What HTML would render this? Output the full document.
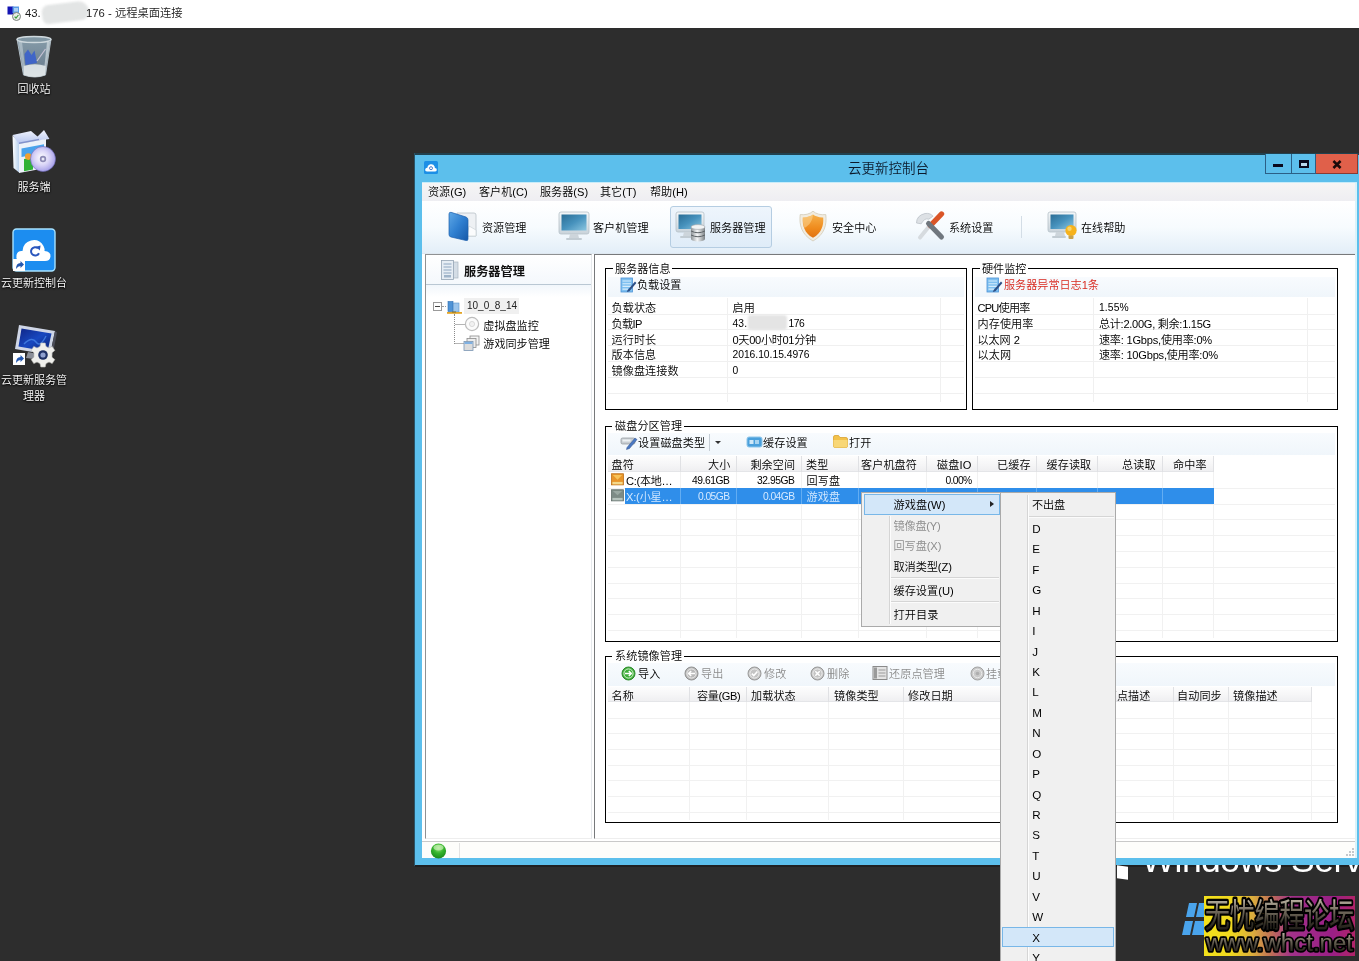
<!DOCTYPE html>
<html lang="zh-CN">
<head>
<meta charset="utf-8">
<title>远程桌面连接</title>
<style>
*{box-sizing:border-box;margin:0;padding:0}
html,body{width:1359px;height:961px;overflow:hidden;background:#2d2d2d}
body{position:relative;font-family:"Liberation Sans","Noto Sans CJK SC",sans-serif;font-size:11.1px;color:#000;line-height:1;font-weight:350}
.a{position:absolute}
.t{position:absolute;white-space:nowrap;line-height:16px;height:16px}
/* top RDP bar */
#rdp{left:0;top:0;width:1359px;height:28px;background:#fff}
/* desktop icons */
.dl{position:absolute;color:#fff;font-size:11px;line-height:15px;text-align:center;width:80px;text-shadow:0 1px 2px #000,0 0 2px #000}
/* window */
#win{left:415px;top:154px;width:960px;height:711px;background:#5cbfec}
#client{left:422px;top:183px;width:935px;height:675px;background:#fff}
#menubar{left:422px;top:183px;width:935px;height:18px;background:linear-gradient(#f6f5f5,#eeeef2)}
#toolbar{left:422px;top:201px;width:935px;height:52px;background:linear-gradient(#ffffff 0%,#f7fbfe 50%,#e3eef8 100%)}
.tb{position:absolute;font-size:12px;line-height:16px;white-space:nowrap}
.panel{position:absolute;background:#fff;border:1px solid #8c8e90}
.grp{position:absolute;border:1px solid #000}
.grp>.lg{position:absolute;top:-8px;left:7px;background:#fff;padding:0 2px;line-height:16px;height:16px;white-space:nowrap}
.hl{position:absolute;height:1px;background:#ededed}
.vl{position:absolute;width:1px;background:#ededed}
.gray{color:#8a8a8a}
/* menus */
.menu{position:absolute;background:#f0f0f0;border:1px solid #aaaaaa}
.mi{position:absolute;white-space:nowrap;line-height:16px;height:16px}
</style>
</head>
<body>
<div id="root" style="position:absolute;left:0;top:0;width:1359px;height:961px;overflow:hidden;will-change:transform;transform:translateZ(0)">

<!-- RDP title bar -->
<div id="rdp" class="a"></div>
<svg class="a" style="left:6px;top:5px" width="16" height="17" viewBox="0 0 16 17">
 <rect x="1.5" y="1.5" width="6" height="8" fill="#1414b4"/>
 <rect x="6.5" y="1.5" width="6.5" height="6.5" fill="#5a9be6"/>
 <rect x="8" y="3" width="4" height="3.5" fill="#a9d0f5"/>
 <circle cx="10.5" cy="11.5" r="4" fill="#e9ece9" stroke="#7d837d" stroke-width="1"/>
 <path d="M8.6 11.6 L10 13 L12.4 10" stroke="#3b9a3b" stroke-width="1.2" fill="none"/>
</svg>
<div class="t" style="left:25px;top:5px;font-size:11.3px;color:#1a1a1a">43.</div>
<div class="a" style="left:42px;top:3px;width:47px;height:19px;background:#e3e5e5;border-radius:9px 14px 12px 8px;filter:blur(1.2px);transform:rotate(-7deg)"></div>
<div class="t" style="left:86px;top:5px;font-size:11.3px;color:#1a1a1a">176 - 远程桌面连接</div>
<!-- desktop icons -->
<svg class="a" style="left:14px;top:33px" width="42" height="48" viewBox="0 0 42 48">
 <defs>
  <linearGradient id="rb1" x1="0" x2="1"><stop offset="0" stop-color="#9fb3bf"/><stop offset=".25" stop-color="#6f8796"/><stop offset=".6" stop-color="#7d8f9c"/><stop offset="1" stop-color="#b9c4cb"/></linearGradient>
  <linearGradient id="rb2" x1="0" y1="0" x2="0" y2="1"><stop offset="0" stop-color="#8aa1af" stop-opacity=".95"/><stop offset=".65" stop-color="#74899a" stop-opacity=".95"/><stop offset="1" stop-color="#d6dde0"/></linearGradient>
 </defs>
 <path d="M3 6 L37 6 L31.5 42 Q21 46 9.5 42 Z" fill="url(#rb2)" stroke="#aebbc3" stroke-width="1"/>
 <path d="M4.5 9 L8 9 L12 42 L10 42 Z" fill="#c9d6dd" opacity=".55"/>
 <path d="M33 9 L36 9 L31 42 L29.5 42 Z" fill="#dfe7eb" opacity=".6"/>
 <ellipse cx="20" cy="6.5" rx="17" ry="3" fill="#8298a5" stroke="#cfd9de" stroke-width="1.3"/>
 <path d="M10.5 21 L14 16.5 L17.5 22 L20.5 17.5 L23 30 L11.5 32 Z" fill="#3b62cc" opacity=".9"/>
 <path d="M23 28 L31.5 16" stroke="#c9c3d6" stroke-width="1.2"/>
 <path d="M9.8 33 Q21 29.5 31.6 33 L31 42 Q21 46 10 42 Z" fill="#dde4e6" opacity=".95"/>
</svg>
<div class="dl" style="left:-6px;top:82px">回收站</div>

<svg class="a" style="left:10px;top:128px" width="48" height="48" viewBox="0 0 48 48">
 <defs>
  <radialGradient id="cd1" cx=".45" cy=".45" r=".6"><stop offset="0" stop-color="#ffffff"/><stop offset=".5" stop-color="#d9d4f7"/><stop offset="1" stop-color="#9f98e6"/></radialGradient>
  <linearGradient id="bx1" x1="0" x2="1"><stop offset="0" stop-color="#ffffff"/><stop offset="1" stop-color="#b9d2ee"/></linearGradient>
  <linearGradient id="bx2" x1="0" y1="0" x2="0" y2="1"><stop offset="0" stop-color="#f2f5fd"/><stop offset="1" stop-color="#b4c4ef"/></linearGradient>
 </defs>
 <path d="M2.5 7.5 L9 13 L9 44.5 L3.5 40 Z" fill="url(#bx1)"/>
 <path d="M2.5 7 L21 3 L27.5 8.5 L34 2 L39.5 11 L9 16 Z" fill="url(#bx2)"/>
 <path d="M9 14.5 L29 10.8 L29 13 L9 17 Z" fill="#6f7fc0" opacity=".75"/>
 <path d="M9 16 L36 11 L36 40 L9 45 Z" fill="#edf2fa"/>
 <path d="M11.5 20.5 L34 16.2 L34 25 L11.5 29 Z" fill="#4aa3ec"/>
 <path d="M14 31 L23 29.5 L23 41.5 L14 43.2 Z" fill="#2fb236"/>
 <circle cx="18.3" cy="28.6" r="3.3" fill="#f0a030"/>
 <circle cx="33" cy="31" r="12.5" fill="url(#cd1)" stroke="#6a66b8" stroke-width=".6"/>
 <circle cx="33" cy="31" r="3.2" fill="#8d8ab5"/><circle cx="33" cy="31" r="1.5" fill="#e8e8f5"/>
</svg>
<div class="dl" style="left:-6px;top:180px">服务端</div>

<svg class="a" style="left:12px;top:228px" width="44" height="44" viewBox="0 0 44 44">
 <rect x="1" y="1" width="42" height="42" rx="3.5" fill="#1c8df0" stroke="#a6e2ff" stroke-width="1.4"/>
 <path d="M9 33 Q3.5 33 4.5 27 Q5.5 22.5 10.5 23 Q11 14.5 19 12.5 Q27 10.5 31.5 18 Q33 21 32.5 23 Q39 23.5 38.5 28.5 Q38 33 33 33 Z" fill="#fff"/>
 <path d="M26 20.2 A4.2 4.2 0 1 0 27 25.2" fill="none" stroke="#2a56bd" stroke-width="2"/>
 <path d="M24 18.8 L28.6 17.6 L27.8 22.4 Z" fill="#2a56bd"/>
 <rect x="1" y="31" width="12" height="12" fill="#fff"/>
 <path d="M4 41 Q4 35 8.5 35 L8.5 33 L12 36.5 L8.5 40 L8.5 38 Q6 38 4 41 Z" fill="#2458b0"/>
</svg>
<div class="dl" style="left:-6px;top:276px">云更新控制台</div>

<svg class="a" style="left:10px;top:322px" width="48" height="48" viewBox="0 0 48 48">
 <defs><linearGradient id="mn1" x1="0" y1="0" x2="1" y2="1"><stop offset="0" stop-color="#0f2585"/><stop offset=".5" stop-color="#1848c0"/><stop offset="1" stop-color="#0a2070"/></linearGradient></defs>
 <path d="M9 3 L45 9 L40 33 L5 27 Z" fill="#cfd6e6"/>
 <path d="M45 9 L47 10.5 L42.5 33.5 L40 33 Z" fill="#4b4d58"/>
 <path d="M11.5 6.5 L41.5 11.5 L37.5 29.5 L8.5 24.5 Z" fill="url(#mn1)"/>
 <path d="M14 22 Q22 14 26 20 T36 14" stroke="#4f8ff0" stroke-width="1.4" fill="none" opacity=".7"/>
 <path d="M18 30 L32 33 L32 38 L16 36 Z" fill="#8b8f99"/>
 <g transform="translate(33,33)">
  <path d="M-2.2 -12 L2.2 -12 L3 -8.6 L6 -7 L9.2 -8.6 L11.8 -4.6 L9 -2.2 L9 2.2 L11.8 4.6 L9.2 8.6 L6 7 L3 8.6 L2.2 12 L-2.2 12 L-3 8.6 L-6 7 L-9.2 8.6 L-11.8 4.6 L-9 2.2 L-9 -2.2 L-11.8 -4.6 L-9.2 -8.6 L-6 -7 L-3 -8.6 Z" fill="#efefec" stroke="#bdbdb8" stroke-width=".6"/>
  <circle r="4.8" fill="#1d2f63"/><circle r="2.6" fill="#8fa0cf"/>
 </g>
 <rect x="3" y="31" width="12" height="12" fill="#fff"/>
 <path d="M6 41 Q6 35 10.5 35 L10.5 33 L14 36.5 L10.5 40 L10.5 38 Q8 38 6 41 Z" fill="#2458b0"/>
</svg>
<div class="dl" style="left:-6px;top:372px;line-height:16px">云更新服务管<br>理器</div>

<!-- window frame -->
<div id="win" class="a"></div>
<div class="a" style="left:415px;top:865px;width:960px;height:2px;background:#1f2022"></div>
<div class="a" style="left:414px;top:153px;width:960px;height:2px;background:#21414f"></div>
<div class="a" style="left:414px;top:153px;width:1px;height:713px;background:#2a5468"></div>
<div id="client" class="a"></div>
<div class="a" style="left:422px;top:182px;width:935px;height:1px;background:#c9ecf9"></div>
<!-- title bar icon -->
<svg class="a" style="left:424px;top:161px" width="14" height="13" viewBox="0 0 14 13">
 <rect x="0" y="0" width="14" height="13" rx="1.5" fill="#1c8fe6"/>
 <path d="M3 10.5 Q0.8 10.5 1.2 8.3 Q1.6 6.6 3.4 6.8 Q3.6 3.8 6.6 3.2 Q9.6 2.8 10.6 5.6 Q10.9 6.4 10.8 7 Q13 7.2 12.8 8.9 Q12.6 10.5 10.8 10.5 Z" fill="#fff"/>
 <circle cx="7" cy="7.2" r="1.5" fill="none" stroke="#3a6fc4" stroke-width=".9"/>
</svg>
<div class="t" style="left:848px;top:160px;font-size:13.5px;line-height:18px;height:18px;color:#0c1a2c">云更新控制台</div>
<!-- window controls -->
<div class="a" style="left:1265px;top:154px;width:27px;height:20px;border:1px solid #2b5f86;border-top:0;background:#5cbfec"></div>
<div class="a" style="left:1292px;top:154px;width:24px;height:20px;border:1px solid #2b5f86;border-top:0;border-left:0;background:#5cbfec"></div>
<div class="a" style="left:1316px;top:154px;width:42px;height:20px;background:#e0604a;border-bottom:1px solid #8a3a32;border-right:1px solid #8a3a32"></div>
<div class="a" style="left:1273px;top:164px;width:10px;height:3px;background:#0a0a1e"></div>
<div class="a" style="left:1299px;top:160px;width:10px;height:8px;border:2px solid #0a0a1e;border-top-width:3px;background:#b9d9ee"></div>
<svg class="a" style="left:1332px;top:159.5px" width="10" height="9" viewBox="0 0 10 9"><path d="M1.4 1 L8.6 8 M8.6 1 L1.4 8" stroke="#1a0a0a" stroke-width="2.5"/></svg>

<div id="menubar" class="a"></div>
<div class="t" style="left:428px;top:184px">资源(G)</div>
<div class="t" style="left:479px;top:184px">客户机(C)</div>
<div class="t" style="left:540px;top:184px">服务器(S)</div>
<div class="t" style="left:600px;top:184px">其它(T)</div>
<div class="t" style="left:650px;top:184px">帮助(H)</div>

<div id="toolbar" class="a"></div>
<!-- main toolbar -->
<svg width="0" height="0" style="position:absolute">
 <defs>
  <linearGradient id="scr" x1="0" y1="0" x2="1" y2="1"><stop offset="0" stop-color="#2a6d95"/><stop offset=".5" stop-color="#4792bd"/><stop offset="1" stop-color="#8cc6e0"/></linearGradient>
  <linearGradient id="bez" x1="0" y1="0" x2="0" y2="1"><stop offset="0" stop-color="#f4f7f9"/><stop offset="1" stop-color="#c9d3da"/></linearGradient>
  <linearGradient id="fld" x1="0" y1="0" x2="1" y2="1"><stop offset="0" stop-color="#5fa8e6"/><stop offset=".5" stop-color="#2f7fd0"/><stop offset="1" stop-color="#1659a8"/></linearGradient>
  <linearGradient id="shd" x1="0" y1="0" x2="0" y2="1"><stop offset="0" stop-color="#f6b04a"/><stop offset=".6" stop-color="#ef8a1c"/><stop offset="1" stop-color="#e07210"/></linearGradient>
  <linearGradient id="dbg" x1="0" x2="1"><stop offset="0" stop-color="#8e9498"/><stop offset=".45" stop-color="#f4f6f7"/><stop offset="1" stop-color="#7d8387"/></linearGradient>
 </defs>
</svg>
<!-- 资源管理 -->
<svg class="a" style="left:447px;top:210px" width="32" height="32" viewBox="0 0 32 32">
 <path d="M10 3 L27 3 Q29 3 29 5 L29 26 L12 26 Z" fill="#eef1f4" stroke="#b9c1c8" stroke-width=".8"/>
 <path d="M22 16 L29 20 L29 26 L20 26 Z" fill="#fbfcfd" stroke="#c5ccd2" stroke-width=".6"/>
 <path d="M2 4 Q2 2 4 2.3 L19 7 Q21 7.8 21 10 L21 29 Q21 31 19 30.5 L4 27 Q2 26.5 2 24.5 Z" fill="url(#fld)" stroke="#1b5fae" stroke-width=".7"/>
</svg>
<div class="t" style="left:482px;top:220px">资源管理</div>
<!-- 客户机管理 -->
<svg class="a" style="left:558px;top:211px" width="32" height="30" viewBox="0 0 32 30">
 <rect x="1" y="1" width="30" height="22" rx="2" fill="url(#bez)" stroke="#b5c0c8" stroke-width=".8"/>
 <rect x="3.5" y="3.5" width="25" height="16" fill="url(#scr)"/>
 <path d="M12 23 L20 23 L21 27 L11 27 Z" fill="#cdd5db"/>
 <rect x="8" y="27" width="16" height="2" rx="1" fill="#c2ccd3"/>
</svg>
<div class="t" style="left:593px;top:220px">客户机管理</div>
<!-- 服务器管理 (selected) -->
<div class="a" style="left:670px;top:206px;width:102px;height:42px;border:1px solid #b5cde2;border-radius:3px;background:linear-gradient(#eef5fc,#dfecf8)"></div>
<svg class="a" style="left:675px;top:211px" width="32" height="31" viewBox="0 0 32 31">
 <rect x="1" y="1" width="28" height="20" rx="2" fill="url(#bez)" stroke="#b5c0c8" stroke-width=".8"/>
 <rect x="3.5" y="3.5" width="23" height="14.5" fill="url(#scr)"/>
 <path d="M9 21 L17 21 L18 25 L8 25 Z" fill="#cdd5db"/>
 <rect x="5" y="25" width="14" height="2" rx="1" fill="#c2ccd3"/>
 <g>
  <rect x="16" y="16" width="14" height="12" fill="url(#dbg)"/>
  <ellipse cx="23" cy="28" rx="7" ry="2.4" fill="url(#dbg)"/>
  <path d="M16 20 Q23 23.5 30 20 M16 24 Q23 27.5 30 24" stroke="#5d6367" stroke-width="1" fill="none"/>
  <ellipse cx="23" cy="16" rx="7" ry="2.4" fill="#f2f4f5" stroke="#9aa0a4" stroke-width=".6"/>
 </g>
</svg>
<div class="t" style="left:710px;top:220px">服务器管理</div>
<!-- 安全中心 -->
<svg class="a" style="left:798px;top:210px" width="30" height="32" viewBox="0 0 30 32">
 <path d="M15 1.2 C12 4 7 5.2 2.2 4.6 C1 15 3.5 24.5 15 31 C26.5 24.5 29 15 27.8 4.6 C23 5.2 18 4 15 1.2 Z" fill="#f1ece0" stroke="#d2cab6" stroke-width=".8"/>
 <path d="M15 4.6 C12.4 6.6 8.6 7.6 4.8 7.4 C4.2 15.5 6.4 22.8 15 27.8 C23.6 22.8 25.8 15.5 25.2 7.4 C21.4 7.6 17.6 6.6 15 4.6 Z" fill="url(#shd)"/>
 <path d="M15 4.6 C12.4 6.6 8.6 7.6 4.8 7.4 C4.6 11.5 5.2 15 6.6 18 C12 15 14.6 10.5 15 4.6 Z" fill="#fcd594" opacity=".55"/>
</svg>
<div class="t" style="left:832px;top:220px">安全中心</div>
<!-- 系统设置 -->
<svg class="a" style="left:914px;top:210px" width="32" height="32" viewBox="0 0 32 32">
 <path d="M6 27.5 L17.5 13.5" stroke="#d6dbdf" stroke-width="4" stroke-linecap="round"/>
 <path d="M2.5 13 Q2.5 5.5 11 3.5 Q16.5 2.8 19 6.2 L14.8 9.2 Q10.5 7.6 7.2 13.8 Z" fill="#dde1e5" stroke="#b4bcc3" stroke-width=".7"/>
 <path d="M27.5 4 L16.5 15.5" stroke="#da5527" stroke-width="5.4" stroke-linecap="round"/>
 <path d="M14.5 13.5 L27.5 27" stroke="#70777e" stroke-width="5" stroke-linecap="round"/>
</svg>
<div class="t" style="left:949px;top:220px">系统设置</div>
<div class="a" style="left:1021px;top:216px;width:1px;height:22px;background:#d3dde6"></div>
<!-- 在线帮助 -->
<svg class="a" style="left:1047px;top:211px" width="32" height="31" viewBox="0 0 32 31">
 <rect x="1" y="1" width="28" height="20" rx="2" fill="url(#bez)" stroke="#b5c0c8" stroke-width=".8"/>
 <rect x="3.5" y="3.5" width="23" height="14.5" fill="url(#scr)"/>
 <path d="M9 21 L17 21 L18 25 L8 25 Z" fill="#cdd5db"/>
 <rect x="5" y="25" width="14" height="2" rx="1" fill="#c2ccd3"/>
 <circle cx="24" cy="19.5" r="5.6" fill="#f6b21c"/>
 <circle cx="22.5" cy="17.8" r="2.2" fill="#fbd566"/>
 <rect x="21.5" y="24.5" width="5" height="3.5" rx="1" fill="#c9a24a"/>
</svg>
<div class="t" style="left:1081px;top:220px">在线帮助</div>
<!-- panels -->
<div class="a" style="left:422px;top:253px;width:935px;height:1px;background:#dfe8f0"></div>
<div class="a" style="left:425px;top:254px;width:167px;height:585px;background:#fff;border:1px solid #8f9193;border-right-color:#e6e9ec;border-bottom-color:#eeeeee"></div>
<div class="a" style="left:426px;top:255px;width:165px;height:29px;background:linear-gradient(#ffffff,#f4f8fc)"></div>
<div class="a" style="left:426px;top:284px;width:165px;height:1px;background:#b9c7d3"></div>
<div class="a" style="left:426px;top:285px;width:165px;height:12px;background:linear-gradient(#f1f6fb,#ffffff)"></div>
<div class="a" style="left:594px;top:254px;width:761px;height:585px;background:#fff;border:1px solid #77797b;border-right:0;border-bottom-color:#eeeeee"></div>

<!-- left header -->
<svg class="a" style="left:440px;top:259px" width="20" height="22" viewBox="0 0 20 22">
 <rect x="8" y="3" width="10" height="16" fill="#d4dde6" stroke="#a9b5c0" stroke-width=".7"/>
 <rect x="1.5" y="1.5" width="12" height="19" fill="#e6edf4" stroke="#93a3b3" stroke-width=".8"/>
 <path d="M3.5 5 H11.5 M3.5 8 H11.5 M3.5 11 H11.5 M3.5 14 H11.5" stroke="#8ea6c0" stroke-width="1"/>
 <rect x="4" y="16" width="7" height="2.5" fill="#9fb4c9"/>
</svg>
<div class="t" style="left:464px;top:264px;font-weight:bold;font-size:12.2px;color:#111">服务器管理</div>

<!-- tree -->
<div class="a" style="left:433px;top:302px;width:9px;height:9px;border:1px solid #9a9a9a;background:#fff"></div>
<div class="a" style="left:435px;top:306px;width:5px;height:1px;background:#444"></div>
<div class="a" style="left:442px;top:306px;width:4px;height:1px;border-top:1px dotted #9a9a9a"></div>
<div class="a" style="left:454px;top:314px;width:1px;height:30px;border-left:1px dotted #8a8a8a"></div>
<div class="a" style="left:455px;top:324px;width:10px;height:1px;background:#b5b5b5"></div>
<div class="a" style="left:455px;top:343px;width:9px;height:1px;background:#b5b5b5"></div>
<svg class="a" style="left:445.5px;top:299.5px" width="17" height="17" viewBox="0 0 17 16">
 <rect x="2" y="1" width="5" height="10" fill="#4f93d6" stroke="#2d6db2" stroke-width=".6"/>
 <rect x="7.5" y="2.5" width="5.5" height="9" fill="#9cc5ec" stroke="#5a94cc" stroke-width=".6"/>
 <rect x="1" y="11.5" width="15" height="1.8" fill="#e3a526"/>
 <rect x="6" y="11" width="4" height="1" fill="#7d6a2a"/>
</svg>
<div class="a" style="left:464px;top:298px;width:55px;height:16px;background:#f0f0f0"></div>
<div class="t" style="left:467px;top:298px;font-size:10px;color:#222">10_0_8_14</div>
<svg class="a" style="left:464px;top:316px" width="16" height="16" viewBox="0 0 16 16">
 <circle cx="8" cy="8" r="6.6" fill="#fbfbfb" stroke="#bdbdbd" stroke-width="1.2"/>
 <circle cx="8" cy="8" r="2.6" fill="#f1f1f1" stroke="#d0d0d0" stroke-width=".7"/>
</svg>
<div class="t" style="left:483.3px;top:318px">虚拟盘监控</div>
<svg class="a" style="left:463px;top:335px" width="17" height="17" viewBox="0 0 17 17">
 <rect x="7" y="1" width="9" height="9" fill="#f4f4f4" stroke="#8c8c8c" stroke-width=".8"/>
 <rect x="4" y="3.5" width="9" height="9" fill="#ececec" stroke="#8c8c8c" stroke-width=".8"/>
 <rect x="1" y="6.5" width="9" height="9" fill="#dcdcdc" stroke="#7a96b4" stroke-width=".8"/>
 <rect x="1.5" y="7" width="8" height="2" fill="#7fb0e2"/>
</svg>
<div class="t" style="left:483.3px;top:336px">游戏同步管理</div>

<!-- group: 服务器信息 -->
<div class="grp" style="left:605px;top:268px;width:362px;height:142px"><span class="lg">服务器信息</span></div>
<div class="a" style="left:608px;top:277px;width:356px;height:20px;background:linear-gradient(#f8fbfe,#f0f6fb)"></div>
<svg class="a" style="left:620px;top:277px" width="17" height="16" viewBox="0 0 17 16">
 <rect x="1" y="1" width="11.5" height="14" fill="#7fc0f0" stroke="#4e93d6" stroke-width=".8"/>
 <path d="M2.5 4 H11 M2.5 6.7 H11 M2.5 9.4 H11 M2.5 12.1 H8" stroke="#d6ecfb" stroke-width="1.1"/>
 <path d="M7.5 13.2 L15 4.6 L16.4 5.9 L9.4 14.2 L6.8 15 Z" fill="#2c4f86"/>
</svg>
<div class="t" style="left:637px;top:277px">负载设置</div>
<!-- group: 硬件监控 -->
<div class="grp" style="left:972px;top:268px;width:366px;height:142px"><span class="lg">硬件监控</span></div>
<div class="a" style="left:975px;top:277px;width:360px;height:20px;background:linear-gradient(#f8fbfe,#f0f6fb)"></div>
<svg class="a" style="left:986px;top:277px" width="17" height="16" viewBox="0 0 17 16">
 <rect x="1" y="1" width="11.5" height="14" fill="#7fc0f0" stroke="#4e93d6" stroke-width=".8"/>
 <path d="M2.5 4 H11 M2.5 6.7 H11 M2.5 9.4 H11 M2.5 12.1 H8" stroke="#d6ecfb" stroke-width="1.1"/>
 <path d="M7.5 13.2 L15 4.6 L16.4 5.9 L9.4 14.2 L6.8 15 Z" fill="#2c4f86"/>
</svg>
<div class="t" style="left:1004px;top:277px;color:#d8281e">服务器异常日志1条</div>
<!-- server info list -->
<div class="a" style="left:608px;top:314px;width:356px;height:1px;background:#f0f0f0"></div>
<div class="a" style="left:608px;top:329px;width:356px;height:1px;background:#f0f0f0"></div>
<div class="a" style="left:608px;top:345px;width:356px;height:1px;background:#f0f0f0"></div>
<div class="a" style="left:608px;top:361px;width:356px;height:1px;background:#f0f0f0"></div>
<div class="a" style="left:608px;top:377px;width:356px;height:1px;background:#f0f0f0"></div>
<div class="a" style="left:608px;top:393px;width:356px;height:1px;background:#f0f0f0"></div>
<div class="a" style="left:727px;top:298px;width:1px;height:104px;background:#f0f0f0"></div>
<div class="a" style="left:940px;top:298px;width:1px;height:104px;background:#f0f0f0"></div>
<div class="t" style="left:611.5px;top:300px;letter-spacing:0.10px;">负载状态</div>
<div class="t" style="left:732.5px;top:300px;letter-spacing:0.10px;">启用</div>
<div class="t" style="left:611.5px;top:316px;letter-spacing:-0.60px;">负载IP</div>
<div class="t" style="left:732.5px;top:316px;font-size:10.3px;letter-spacing:0.12px;">43.</div>
<div class="a" style="left:748px;top:315px;width:39px;height:15px;background:#e4e4e4;border-radius:3px;filter:blur(.9px)"></div>
<div class="t" style="left:788.5px;top:316px;font-size:10.3px;letter-spacing:-0.46px;">176</div>
<div class="t" style="left:611.5px;top:332px;letter-spacing:0.10px;">运行时长</div>
<div class="t" style="left:732.5px;top:332px;letter-spacing:-0.30px;">0天00小时01分钟</div>
<div class="t" style="left:611.5px;top:347px;letter-spacing:0.10px;">版本信息</div>
<div class="t" style="left:732.5px;top:347px;font-size:10.3px;letter-spacing:-0.02px;">2016.10.15.4976</div>
<div class="t" style="left:611.5px;top:363px;letter-spacing:0.10px;">镜像盘连接数</div>
<div class="t" style="left:732.5px;top:363px;font-size:10.3px;">0</div>
<!-- hardware list -->
<div class="a" style="left:975px;top:314px;width:360px;height:1px;background:#f0f0f0"></div>
<div class="a" style="left:975px;top:329px;width:360px;height:1px;background:#f0f0f0"></div>
<div class="a" style="left:975px;top:345px;width:360px;height:1px;background:#f0f0f0"></div>
<div class="a" style="left:975px;top:361px;width:360px;height:1px;background:#f0f0f0"></div>
<div class="a" style="left:975px;top:377px;width:360px;height:1px;background:#f0f0f0"></div>
<div class="a" style="left:975px;top:393px;width:360px;height:1px;background:#f0f0f0"></div>
<div class="a" style="left:1093px;top:298px;width:1px;height:104px;background:#f0f0f0"></div>
<div class="a" style="left:1307px;top:298px;width:1px;height:104px;background:#f0f0f0"></div>
<div class="t" style="left:977.5px;top:300px;letter-spacing:-0.77px;">CPU使用率</div>
<div class="t" style="left:1099px;top:300px;font-size:10.3px;letter-spacing:0.12px;">1.55%</div>
<div class="t" style="left:977.5px;top:316px;letter-spacing:0.10px;">内存使用率</div>
<div class="t" style="left:1099px;top:316px;letter-spacing:-0.29px;">总计:2.00G, 剩余:1.15G</div>
<div class="t" style="left:977.5px;top:332px;letter-spacing:-0.04px;">以太网 2</div>
<div class="t" style="left:1099px;top:332px;letter-spacing:-0.22px;">速率: 1Gbps,使用率:0%</div>
<div class="t" style="left:977.5px;top:347px;letter-spacing:0.10px;">以太网</div>
<div class="t" style="left:1099px;top:347px;letter-spacing:-0.23px;">速率: 10Gbps,使用率:0%</div>
<!-- disk group -->
<div class="grp" style="left:605px;top:426px;width:733px;height:216px"></div>
<div class="a" style="left:612px;top:420px;width:72px;height:14px;background:#fff"></div>
<div class="t" style="left:615px;top:418px;letter-spacing:0.10px;">磁盘分区管理</div>
<div class="a" style="left:608px;top:433px;width:727px;height:22px;background:linear-gradient(#f8fbfe,#f0f6fb)"></div>
<svg class="a" style="left:620px;top:434px" width="18" height="16" viewBox="0 0 18 16">
 <rect x="1" y="4" width="14" height="6" rx="1.5" fill="#c9ced3" stroke="#8d949a" stroke-width=".7"/>
 <rect x="2.5" y="5.5" width="8" height="2" fill="#eef1f3"/>
 <path d="M7 13.5 L15 4 L17 5.6 L9.5 14.5 L6.5 15.5 Z" fill="#4a78c2" stroke="#2d4f8c" stroke-width=".5"/>
</svg>
<div class="t" style="left:638px;top:435px;letter-spacing:0.10px;">设置磁盘类型</div>
<div class="a" style="left:709px;top:434px;width:1px;height:17px;background:#c5cdd5"></div>
<div class="a" style="left:714.5px;top:441px;width:0;height:0;border:3px solid transparent;border-top:3px solid #333;border-bottom:0"></div>
<svg class="a" style="left:746px;top:435px" width="17" height="14" viewBox="0 0 17 14">
 <rect x="1" y="2" width="15" height="10" rx="2" fill="#4aa0dc" stroke="#8fc6ea" stroke-width="1"/>
 <rect x="3.5" y="5" width="4" height="4" fill="#cfe8f8"/><rect x="9" y="5" width="4" height="4" fill="#a8d4f0"/>
</svg>
<div class="t" style="left:763px;top:435px;letter-spacing:0.10px;">缓存设置</div>
<svg class="a" style="left:832px;top:434px" width="17" height="15" viewBox="0 0 17 15">
 <path d="M1.5 3 Q1.5 1.5 3 1.5 L6.5 1.5 L8 3.5 L14 3.5 Q15.5 3.5 15.5 5 L15.5 12 Q15.5 13.5 14 13.5 L3 13.5 Q1.5 13.5 1.5 12 Z" fill="#f3c24a" stroke="#d59b22" stroke-width=".7"/>
 <path d="M1.5 6 L15.5 6 L15.5 12 Q15.5 13.5 14 13.5 L3 13.5 Q1.5 13.5 1.5 12 Z" fill="#f8d777"/>
</svg>
<div class="t" style="left:849px;top:435px;letter-spacing:0.10px;">打开</div>
<div class="a" style="left:608px;top:456px;width:606px;height:16px;background:linear-gradient(#fdfdfd,#f6f6f7 55%,#efeff1);border-bottom:1px solid #e4e5e8"></div>
<div class="a" style="left:680px;top:456px;width:1px;height:16px;background:#e0e1e4"></div>
<div class="a" style="left:680px;top:472px;width:1px;height:166px;background:#f1f1f1"></div>
<div class="a" style="left:736px;top:456px;width:1px;height:16px;background:#e0e1e4"></div>
<div class="a" style="left:736px;top:472px;width:1px;height:166px;background:#f1f1f1"></div>
<div class="a" style="left:801px;top:456px;width:1px;height:16px;background:#e0e1e4"></div>
<div class="a" style="left:801px;top:472px;width:1px;height:166px;background:#f1f1f1"></div>
<div class="a" style="left:858px;top:456px;width:1px;height:16px;background:#e0e1e4"></div>
<div class="a" style="left:858px;top:472px;width:1px;height:166px;background:#f1f1f1"></div>
<div class="a" style="left:926px;top:456px;width:1px;height:16px;background:#e0e1e4"></div>
<div class="a" style="left:926px;top:472px;width:1px;height:166px;background:#f1f1f1"></div>
<div class="a" style="left:977px;top:456px;width:1px;height:16px;background:#e0e1e4"></div>
<div class="a" style="left:977px;top:472px;width:1px;height:166px;background:#f1f1f1"></div>
<div class="a" style="left:1036px;top:456px;width:1px;height:16px;background:#e0e1e4"></div>
<div class="a" style="left:1036px;top:472px;width:1px;height:166px;background:#f1f1f1"></div>
<div class="a" style="left:1097px;top:456px;width:1px;height:16px;background:#e0e1e4"></div>
<div class="a" style="left:1097px;top:472px;width:1px;height:166px;background:#f1f1f1"></div>
<div class="a" style="left:1162px;top:456px;width:1px;height:16px;background:#e0e1e4"></div>
<div class="a" style="left:1162px;top:472px;width:1px;height:166px;background:#f1f1f1"></div>
<div class="a" style="left:1213px;top:456px;width:1px;height:16px;background:#e0e1e4"></div>
<div class="a" style="left:1213px;top:472px;width:1px;height:166px;background:#f1f1f1"></div>
<div class="a" style="left:608px;top:488px;width:727px;height:1px;background:#f1f1f1"></div>
<div class="a" style="left:608px;top:504px;width:727px;height:1px;background:#f1f1f1"></div>
<div class="a" style="left:608px;top:519px;width:727px;height:1px;background:#f1f1f1"></div>
<div class="a" style="left:608px;top:535px;width:727px;height:1px;background:#f1f1f1"></div>
<div class="a" style="left:608px;top:551px;width:727px;height:1px;background:#f1f1f1"></div>
<div class="a" style="left:608px;top:567px;width:727px;height:1px;background:#f1f1f1"></div>
<div class="a" style="left:608px;top:583px;width:727px;height:1px;background:#f1f1f1"></div>
<div class="a" style="left:608px;top:598px;width:727px;height:1px;background:#f1f1f1"></div>
<div class="a" style="left:608px;top:614px;width:727px;height:1px;background:#f1f1f1"></div>
<div class="a" style="left:608px;top:630px;width:727px;height:1px;background:#f1f1f1"></div>
<div class="t" style="left:611.5px;top:457px;letter-spacing:0.10px;">盘符</div>
<div class="t" style="left:708px;top:457px;letter-spacing:0.10px;">大小</div>
<div class="t" style="left:750.4px;top:457px;letter-spacing:0.10px;">剩余空间</div>
<div class="t" style="left:806px;top:457px;letter-spacing:0.10px;">类型</div>
<div class="t" style="left:861px;top:457px;letter-spacing:0.10px;">客户机盘符</div>
<div class="t" style="left:937px;top:457px;letter-spacing:0.17px;">磁盘IO</div>
<div class="t" style="left:997px;top:457px;letter-spacing:0.10px;">已缓存</div>
<div class="t" style="left:1046.5px;top:457px;letter-spacing:0.10px;">缓存读取</div>
<div class="t" style="left:1122px;top:457px;letter-spacing:0.10px;">总读取</div>
<div class="t" style="left:1173px;top:457px;letter-spacing:0.10px;">命中率</div>
<svg class="a" style="left:610.5px;top:473px" width="13" height="13" viewBox="0 0 14 14">
 <rect x=".5" y=".8" width="13" height="12" fill="#e8952a" stroke="#b96a12" stroke-width=".8"/>
 <path d="M2 2.2 L7 7.4 L12 2.2" fill="#f7c35a"/>
 <rect x="1.5" y="9.6" width="11" height="2.6" fill="#f4d98c"/>
</svg>
<div class="t" style="left:626px;top:473px;letter-spacing:-0.28px;">C:(本地…</div>
<div class="t" style="left:692px;top:473px;font-size:10.3px;letter-spacing:-0.47px;">49.61GB</div>
<div class="t" style="left:757px;top:473px;font-size:10.3px;letter-spacing:-0.47px;">32.95GB</div>
<div class="t" style="left:806.5px;top:473px;letter-spacing:0.10px;">回写盘</div>
<div class="t" style="left:945.5px;top:473px;font-size:10.3px;letter-spacing:-0.64px;">0.00%</div>
<div class="a" style="left:625px;top:488px;width:589px;height:15.5px;background:#2f8eea"></div>
<div class="a" style="left:680px;top:488px;width:1px;height:15.5px;background:#63adf2"></div>
<div class="a" style="left:736px;top:488px;width:1px;height:15.5px;background:#63adf2"></div>
<div class="a" style="left:801px;top:488px;width:1px;height:15.5px;background:#63adf2"></div>
<div class="a" style="left:858px;top:488px;width:1px;height:15.5px;background:#63adf2"></div>
<div class="a" style="left:926px;top:488px;width:1px;height:15.5px;background:#63adf2"></div>
<div class="a" style="left:977px;top:488px;width:1px;height:15.5px;background:#63adf2"></div>
<div class="a" style="left:1036px;top:488px;width:1px;height:15.5px;background:#63adf2"></div>
<div class="a" style="left:1097px;top:488px;width:1px;height:15.5px;background:#63adf2"></div>
<div class="a" style="left:1162px;top:488px;width:1px;height:15.5px;background:#63adf2"></div>
<svg class="a" style="left:610.5px;top:488.5px" width="13" height="13" viewBox="0 0 14 14">
 <rect x=".5" y=".8" width="13" height="12" fill="#7d8b86" stroke="#5d6a66" stroke-width=".8"/>
 <path d="M2 2.2 L7 6.8 L12 2.2" fill="#9aa8a2"/>
 <rect x="1.5" y="9.6" width="11" height="2.6" fill="#b6c3bd"/>
</svg>
<div class="t" style="left:626px;top:489px;letter-spacing:-0.18px;color:#d4e9ff;">X:(小星…</div>
<div class="t" style="left:698px;top:489px;font-size:10.3px;letter-spacing:-0.57px;color:#d4e9ff;">0.05GB</div>
<div class="t" style="left:763px;top:489px;font-size:10.3px;letter-spacing:-0.57px;color:#d4e9ff;">0.04GB</div>
<div class="t" style="left:806.5px;top:489px;letter-spacing:0.10px;color:#d4e9ff;">游戏盘</div>
<!-- sysimage group -->
<div class="grp" style="left:605px;top:656px;width:733px;height:167px"></div>
<div class="a" style="left:612px;top:650px;width:72px;height:14px;background:#fff"></div>
<div class="t" style="left:615px;top:648px;letter-spacing:0.10px;">系统镜像管理</div>
<div class="a" style="left:608px;top:663px;width:727px;height:23px;background:linear-gradient(#f8fbfe,#f0f6fb)"></div>
<svg class="a" style="left:621px;top:665.5px" width="15" height="15" viewBox="0 0 15 15">
 <circle cx="7.5" cy="7.5" r="6.5" fill="#3fae3a" stroke="#2b8a2a" stroke-width="1"/><circle cx="7.5" cy="7.5" r="4.6" fill="none" stroke="#d7f3d2" stroke-width="1"/><path d="M4 7.5 H10 M7.8 5 L10.4 7.5 L7.8 10" stroke="#fff" stroke-width="1.5" fill="none"/></svg>
<div class="t" style="left:638px;top:666px;letter-spacing:0.10px;">导入</div>
<svg class="a" style="left:684px;top:665.5px" width="15" height="15" viewBox="0 0 15 15">
 <circle cx="7.5" cy="7.5" r="6.5" fill="#b9b9b9" stroke="#8f8f8f" stroke-width="1"/><circle cx="7.5" cy="7.5" r="4.6" fill="none" stroke="#ededed" stroke-width="1"/><path d="M11 7.5 H5 M7.2 5 L4.6 7.5 L7.2 10" stroke="#fff" stroke-width="1.5" fill="none"/></svg>
<div class="t" style="left:701px;top:666px;letter-spacing:0.10px;color:#8c8c8c;">导出</div>
<svg class="a" style="left:747px;top:665.5px" width="15" height="15" viewBox="0 0 15 15">
 <circle cx="7.5" cy="7.5" r="6.5" fill="#c4c4c4" stroke="#979797" stroke-width="1"/><circle cx="7.5" cy="7.5" r="4.6" fill="none" stroke="#efefef" stroke-width="1"/><path d="M4.8 7.6 L6.8 9.6 L10.4 5.4" stroke="#fff" stroke-width="1.5" fill="none"/></svg>
<div class="t" style="left:764px;top:666px;letter-spacing:0.10px;color:#8c8c8c;">修改</div>
<svg class="a" style="left:810px;top:665.5px" width="15" height="15" viewBox="0 0 15 15">
 <circle cx="7.5" cy="7.5" r="6.5" fill="#c4c4c4" stroke="#979797" stroke-width="1"/><circle cx="7.5" cy="7.5" r="4.6" fill="none" stroke="#efefef" stroke-width="1"/><path d="M5.3 5.3 L9.7 9.7 M9.7 5.3 L5.3 9.7" stroke="#fff" stroke-width="1.5" fill="none"/></svg>
<div class="t" style="left:827px;top:666px;letter-spacing:0.10px;color:#8c8c8c;">删除</div>
<svg class="a" style="left:872px;top:665px" width="16" height="16" viewBox="0 0 16 16">
 <rect x="1" y="1.5" width="14" height="13" fill="#e4e4e4" stroke="#8a8a8a" stroke-width="1"/>
 <rect x="2" y="2.5" width="3" height="11" fill="#9a9a9a"/>
 <path d="M6.5 5 H13.5 M6.5 8 H13.5 M6.5 11 H13.5" stroke="#9a9a9a" stroke-width="1"/>
</svg>
<div class="t" style="left:889px;top:666px;letter-spacing:0.10px;color:#8c8c8c;">还原点管理</div>
<svg class="a" style="left:970px;top:665.5px" width="15" height="15" viewBox="0 0 15 15">
 <circle cx="7.5" cy="7.5" r="6.5" fill="#c9c9c9" stroke="#a2a2a2" stroke-width="1"/><circle cx="7.5" cy="7.5" r="4.2" fill="none" stroke="#e9e9e9" stroke-width="1"/><circle cx="7.5" cy="7.5" r="1.8" fill="#aeaeae"/></svg>
<div class="t" style="left:986px;top:666px;letter-spacing:0.10px;color:#8c8c8c;">挂载</div>
<div class="a" style="left:608px;top:687px;width:704px;height:15px;background:linear-gradient(#fdfdfd,#f6f6f7 55%,#efeff1);border-bottom:1px solid #e4e5e8"></div>
<div class="a" style="left:689px;top:687px;width:1px;height:15px;background:#e0e1e4"></div>
<div class="a" style="left:689px;top:702px;width:1px;height:118px;background:#f1f1f1"></div>
<div class="a" style="left:746px;top:687px;width:1px;height:15px;background:#e0e1e4"></div>
<div class="a" style="left:746px;top:702px;width:1px;height:118px;background:#f1f1f1"></div>
<div class="a" style="left:828px;top:687px;width:1px;height:15px;background:#e0e1e4"></div>
<div class="a" style="left:828px;top:702px;width:1px;height:118px;background:#f1f1f1"></div>
<div class="a" style="left:903px;top:687px;width:1px;height:15px;background:#e0e1e4"></div>
<div class="a" style="left:903px;top:702px;width:1px;height:118px;background:#f1f1f1"></div>
<div class="a" style="left:1173px;top:687px;width:1px;height:15px;background:#e0e1e4"></div>
<div class="a" style="left:1173px;top:702px;width:1px;height:118px;background:#f1f1f1"></div>
<div class="a" style="left:1228px;top:687px;width:1px;height:15px;background:#e0e1e4"></div>
<div class="a" style="left:1228px;top:702px;width:1px;height:118px;background:#f1f1f1"></div>
<div class="a" style="left:1311px;top:687px;width:1px;height:15px;background:#e0e1e4"></div>
<div class="a" style="left:1311px;top:702px;width:1px;height:118px;background:#f1f1f1"></div>
<div class="a" style="left:608px;top:718px;width:727px;height:1px;background:#f1f1f1"></div>
<div class="a" style="left:608px;top:733px;width:727px;height:1px;background:#f1f1f1"></div>
<div class="a" style="left:608px;top:749px;width:727px;height:1px;background:#f1f1f1"></div>
<div class="a" style="left:608px;top:765px;width:727px;height:1px;background:#f1f1f1"></div>
<div class="a" style="left:608px;top:780px;width:727px;height:1px;background:#f1f1f1"></div>
<div class="a" style="left:608px;top:796px;width:727px;height:1px;background:#f1f1f1"></div>
<div class="a" style="left:608px;top:812px;width:727px;height:1px;background:#f1f1f1"></div>
<div class="t" style="left:611.5px;top:688px;letter-spacing:0.10px;">名称</div>
<div class="t" style="left:697px;top:688px;letter-spacing:-0.37px;">容量(GB)</div>
<div class="t" style="left:751px;top:688px;letter-spacing:0.10px;">加载状态</div>
<div class="t" style="left:834px;top:688px;letter-spacing:0.10px;">镜像类型</div>
<div class="t" style="left:908px;top:688px;letter-spacing:0.10px;">修改日期</div>
<div class="t" style="left:1094.5px;top:688px;letter-spacing:0.10px;">还原点描述</div>
<div class="t" style="left:1177px;top:688px;letter-spacing:0.10px;">自动同步</div>
<div class="t" style="left:1233px;top:688px;letter-spacing:0.10px;">镜像描述</div>
<!-- status bar -->
<div class="a" style="left:422px;top:841px;width:935px;height:1px;background:#c9c9c9"></div>
<div class="a" style="left:422px;top:842px;width:935px;height:16px;background:#fdfdfb"></div>
<div class="a" style="left:459px;top:843px;width:1px;height:15px;background:#e3e3e3"></div>
<svg class="a" style="left:430px;top:843px" width="17" height="16" viewBox="0 0 17 16">
 <defs><radialGradient id="gb" cx=".5" cy=".3" r=".7"><stop offset="0" stop-color="#9fe27f"/><stop offset=".5" stop-color="#35b52c"/><stop offset="1" stop-color="#1b8a1c"/></radialGradient></defs>
 <circle cx="8.5" cy="8" r="7.6" fill="url(#gb)"/>
 <ellipse cx="8.5" cy="4.6" rx="5" ry="2.8" fill="#d9f7c8" opacity=".6"/>
</svg>
<div class="a" style="left:1355px;top:183px;width:2px;height:675px;background:#d9f3fb"></div>
<!-- behind-window desktop bits -->
<div class="a" style="left:1117px;top:865px;width:242px;height:20px;overflow:hidden"><div class="a" style="left:24.6px;top:-25.3px;font-size:35.5px;line-height:40px;color:#fff;white-space:nowrap;font-family:'Liberation Sans',sans-serif;letter-spacing:-.55px">Windows Server 2012 R2</div><div class="a" style="left:-1px;top:0;width:12px;height:13px;background:#fff;transform:skewY(8deg);transform-origin:0 0"></div></div>
<svg class="a" style="left:1344px;top:846px" width="11" height="11" viewBox="0 0 11 11"><g fill="#c4c8cc"><rect x="8" y="8" width="2" height="2"/><rect x="5" y="8" width="2" height="2"/><rect x="2" y="8" width="2" height="2"/><rect x="8" y="5" width="2" height="2"/><rect x="5" y="5" width="2" height="2"/><rect x="8" y="2" width="2" height="2"/></g></svg>
<!-- context menu -->
<div class="menu" style="left:861px;top:492px;width:140px;height:135px"></div>
<div class="a" style="left:864px;top:494px;width:136px;height:21px;background:#d3e7f9;border:1px solid #78b7e8"></div>
<div class="a" style="left:889px;top:516px;width:1px;height:108px;background:#d5d5d5"></div><div class="a" style="left:890px;top:516px;width:1px;height:108px;background:#fdfdfd"></div>
<div class="mi" style="left:893.5px;top:497px;font-size:11.2px;letter-spacing:0.07px;">游戏盘(W)</div>
<div class="a" style="left:990px;top:500.5px;width:0;height:0;border:3.5px solid transparent;border-left:4px solid #222;border-right:0"></div>
<div class="mi" style="left:893.5px;top:518px;font-size:11.2px;letter-spacing:-0.25px;color:#8d8d8d;">镜像盘(Y)</div>
<div class="mi" style="left:893.5px;top:538px;font-size:11.2px;letter-spacing:-0.11px;color:#8d8d8d;">回写盘(X)</div>
<div class="mi" style="left:893.5px;top:559px;font-size:11.2px;letter-spacing:-0.11px;">取消类型(Z)</div>
<div class="a" style="left:891px;top:577px;width:108px;height:1px;background:#d5d5d5"></div><div class="a" style="left:891px;top:578px;width:108px;height:1px;background:#fbfbfb"></div>
<div class="mi" style="left:893.5px;top:583px;font-size:11.2px;letter-spacing:-0.01px;">缓存设置(U)</div>
<div class="a" style="left:891px;top:601px;width:108px;height:1px;background:#d5d5d5"></div><div class="a" style="left:891px;top:602px;width:108px;height:1px;background:#fbfbfb"></div>
<div class="mi" style="left:893.5px;top:607px;font-size:11.2px;letter-spacing:0.03px;">打开目录</div>
<!-- submenu -->
<div class="menu" style="left:1000px;top:492px;width:116px;height:480px"></div>
<div class="a" style="left:1027px;top:495px;width:1px;height:466px;background:#d5d5d5"></div><div class="a" style="left:1028px;top:495px;width:1px;height:466px;background:#fdfdfd"></div>
<div class="mi" style="left:1032px;top:497px;font-size:11.2px;letter-spacing:-0.19px;">不出盘</div>
<div class="a" style="left:1029px;top:516px;width:85px;height:1px;background:#d5d5d5"></div><div class="a" style="left:1029px;top:517px;width:85px;height:1px;background:#fbfbfb"></div>
<div class="a" style="left:1002px;top:927px;width:112px;height:20px;background:#d3e7f9;border:1px solid #78b7e8"></div>
<div class="mi" style="left:1032.3px;top:521px;font-size:11.6px;">D</div>
<div class="mi" style="left:1032.3px;top:541px;font-size:11.6px;">E</div>
<div class="mi" style="left:1032.3px;top:562px;font-size:11.6px;">F</div>
<div class="mi" style="left:1032.3px;top:582px;font-size:11.6px;">G</div>
<div class="mi" style="left:1032.3px;top:603px;font-size:11.6px;">H</div>
<div class="mi" style="left:1032.3px;top:623px;font-size:11.6px;">I</div>
<div class="mi" style="left:1032.3px;top:644px;font-size:11.6px;">J</div>
<div class="mi" style="left:1032.3px;top:664px;font-size:11.6px;">K</div>
<div class="mi" style="left:1032.3px;top:684px;font-size:11.6px;">L</div>
<div class="mi" style="left:1032.3px;top:705px;font-size:11.6px;">M</div>
<div class="mi" style="left:1032.3px;top:725px;font-size:11.6px;">N</div>
<div class="mi" style="left:1032.3px;top:746px;font-size:11.6px;">O</div>
<div class="mi" style="left:1032.3px;top:766px;font-size:11.6px;">P</div>
<div class="mi" style="left:1032.3px;top:787px;font-size:11.6px;">Q</div>
<div class="mi" style="left:1032.3px;top:807px;font-size:11.6px;">R</div>
<div class="mi" style="left:1032.3px;top:827px;font-size:11.6px;">S</div>
<div class="mi" style="left:1032.3px;top:848px;font-size:11.6px;">T</div>
<div class="mi" style="left:1032.3px;top:868px;font-size:11.6px;">U</div>
<div class="mi" style="left:1032.3px;top:889px;font-size:11.6px;">V</div>
<div class="mi" style="left:1032.3px;top:909px;font-size:11.6px;">W</div>
<div class="mi" style="left:1032.3px;top:930px;font-size:11.6px;">X</div>
<div class="mi" style="left:1032.3px;top:950px;font-size:11.6px;">Y</div>
<!-- watermark -->
<svg class="a" style="left:1180px;top:890px" width="179" height="71" viewBox="0 0 179 71">
 <defs>
  <linearGradient id="wm" x1="0" x2="1"><stop offset="0" stop-color="#f3e11c"/><stop offset=".18" stop-color="#f0d81f"/><stop offset=".32" stop-color="#dcae3c"/><stop offset=".45" stop-color="#bd6c58"/><stop offset=".58" stop-color="#a2318a"/><stop offset=".85" stop-color="#9a1f86"/><stop offset="1" stop-color="#b02468"/></linearGradient>
  <linearGradient id="wt" x1="0" y1="0" x2="0" y2="1"><stop offset="0" stop-color="#cfc8b8"/><stop offset=".35" stop-color="#7d7566"/><stop offset=".7" stop-color="#3a352c"/><stop offset="1" stop-color="#15120d"/></linearGradient>
  <filter id="wsh" x="-5%" y="-10%" width="110%" height="125%"><feGaussianBlur stdDeviation=".5"/></filter>
 </defs>
 <g fill="#4aa4ec">
  <path d="M9 13 L17 13 L14 27 L6 27 Z"/><path d="M19 13 L24 13 L24 27 L16 27 Z"/>
  <path d="M5 31 L13 31 L10 45 L2 45 Z"/><path d="M15 31 L24 31 L24 45 L12 45 Z"/>
 </g>
 <rect x="24" y="6" width="151" height="60" fill="url(#wm)"/>
 <g filter="url(#wsh)">
 <g transform="translate(25,36.5) scale(1,1.36)">
  <text x="0" y="0" font-family="'Liberation Sans','Noto Sans CJK SC',sans-serif" font-weight="400" font-size="24.6" fill="url(#wt)" stroke="#050403" stroke-width="3.4" stroke-linejoin="round" paint-order="stroke" textLength="149" lengthAdjust="spacingAndGlyphs">无忧编程论坛</text>
 </g>
 <text x="26" y="61" font-family="'Liberation Sans',sans-serif" font-size="23" fill="url(#wt)" stroke="#050403" stroke-width="3.3" stroke-linejoin="round" paint-order="stroke" textLength="147" lengthAdjust="spacingAndGlyphs">www.whct.net</text>
 </g>
</svg>

</div>
</body>
</html>
